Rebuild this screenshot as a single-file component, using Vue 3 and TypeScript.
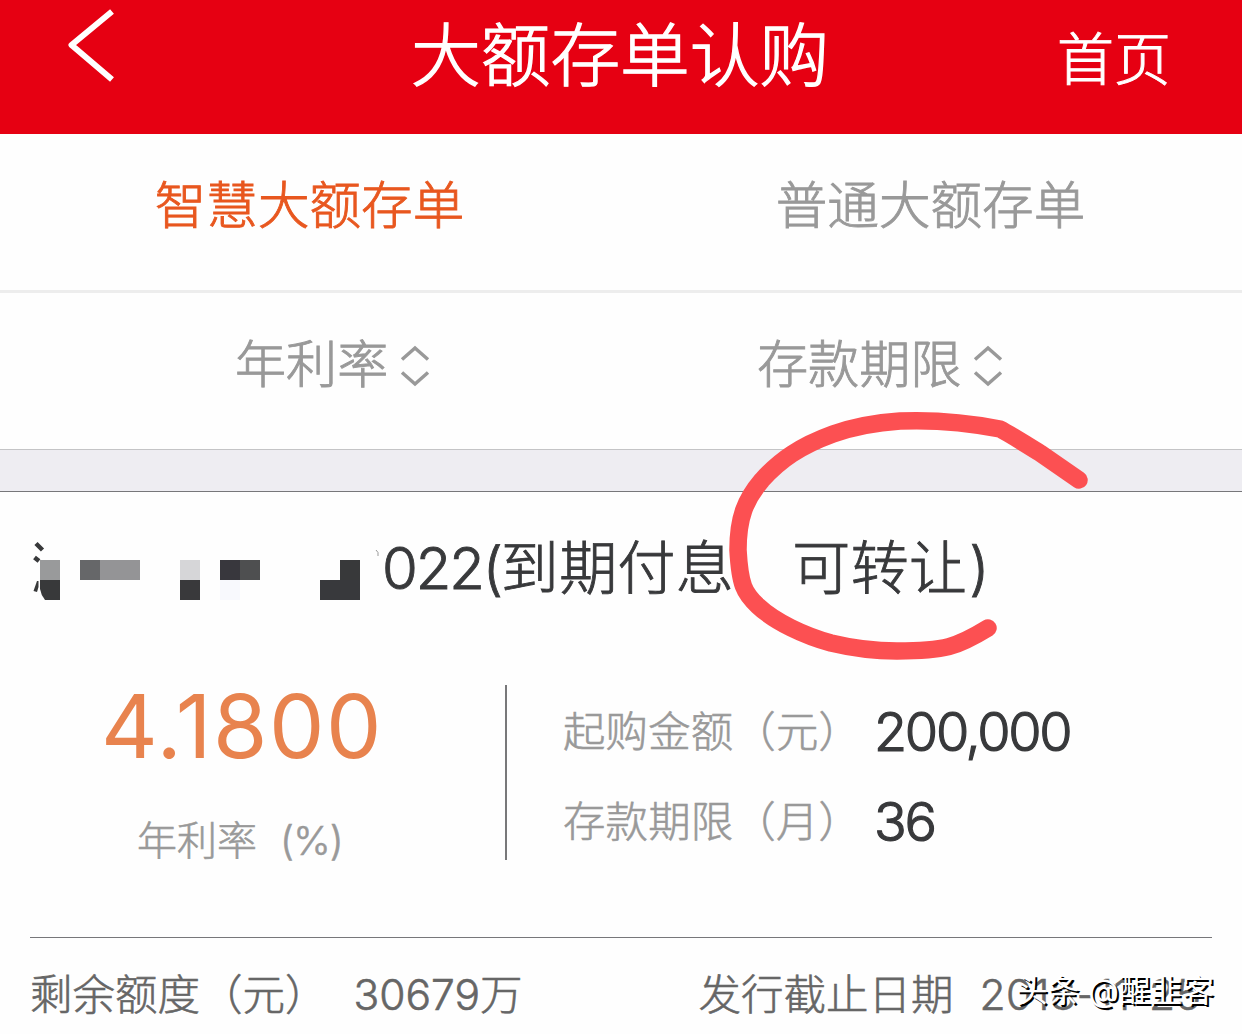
<script setup lang="ts">
import { ref } from 'vue'

interface Block {
  x: number
  y: number
  w: number
  color: string
}

const tabs = ['智慧大额存单', '普通大额存单']
const activeTab = ref(0)

const sorters = [
  { label: '年利率', className: 'sorter-rate' },
  { label: '存款期限', className: 'sorter-term' },
]

const details = [
  { label: '起购金额（元）', value: '200,000' },
  { label: '存款期限（月）', value: '36' },
]

// 产品名称的打码色块
const blocks: Block[] = [
  { x: 50, y: 0, w: 20, color: '#666769' },
  { x: 70, y: 0, w: 40, color: '#949496' },
  { x: 150, y: 0, w: 20, color: '#d6d6d8' },
  { x: 150, y: 20, w: 20, color: '#39393b' },
  { x: 190, y: 0, w: 20, color: '#38373d' },
  { x: 210, y: 0, w: 20, color: '#4e4f50' },
  { x: 190, y: 20, w: 20, color: '#f8f9fd' },
  { x: 310, y: 0, w: 20, color: '#38393a' },
  { x: 290, y: 20, w: 40, color: '#38393c' },
]
</script>

<template>
  <div class="page">
    <header class="navbar">
      <svg class="back" width="60" height="90" viewBox="0 0 60 90">
        <path d="M52 11.5 L11.5 45 L52 79.5" />
      </svg>
      <h1 class="title">大额存单认购</h1>
      <span class="home">首页</span>
    </header>

    <nav class="tabs">
      <span
        v-for="(tab, i) in tabs"
        :key="tab"
        class="tab"
        :class="{ active: i === activeTab }"
        @click="activeTab = i"
      >{{ tab }}</span>
    </nav>

    <div class="sorters">
      <div v-for="s in sorters" :key="s.label" class="sorter" :class="s.className">
        <span>{{ s.label }}</span>
        <svg width="30" height="42" viewBox="0 0 30 42">
          <path d="M2 14.5 L15 3 L28 14.5 M2 27.5 L15 39 L28 27.5" />
        </svg>
      </div>
    </div>

    <div class="band" />

    <section class="card">
      <div class="name">
        <svg class="mosaic" width="352" height="70" viewBox="0 0 352 70">
          <path class="stroke" d="M6 9.500 L12.500 16 M4.500 23.500 L9 27" />
          <path class="fill" d="M7 47 L8.500 47 L8.500 53 L7 58 L3.500 57 Z" />
          <path class="tick" d="M346 16 q3 2 2 6" />
          <rect x="10" y="26" width="20" height="20" fill="#999a9b" />
          <path class="fill" d="M10 46 H30 V66 H15 Q11 61 10 55 Z" />
          <rect
            v-for="(b, i) in blocks"
            :key="i"
            :x="b.x"
            :y="b.y + 26"
            :width="b.w"
            height="20"
            :fill="b.color"
          />
        </svg>
        <span class="code">022(</span><span class="term">到期付息　可转让</span><span>)</span>
      </div>

      <div class="body">
        <div class="rate">
          <div class="rate-value">4.1800</div>
          <div class="rate-label">年利率<span class="unit">(%)</span></div>
        </div>
        <dl class="details">
          <div v-for="d in details" :key="d.label" class="detail">
            <dt>{{ d.label }}</dt>
            <dd>{{ d.value }}</dd>
          </div>
        </dl>
      </div>

      <footer class="footer">
        <span>剩余额度（元）</span>
        <span class="quota">30679万</span>
        <span class="deadline">发行截止日期</span>
        <span class="date">2018-11-25</span>
      </footer>
    </section>

    <!-- 手绘圈注 -->
    <svg class="circle" width="380" height="270" viewBox="720 400 380 270">
      <path
        d="M1079 480 L1040 453 C1025 444 1010 434 1000 429 C960 421 925 420 900 421 C870 423 850 428 833 434 C800 446 780 460 762 480 C745 500 738 518 738 550 C740 585 744 593 758 606 C775 622 805 636 831 643 C860 650 880 651 897 651 C945 651 957 647 988 628"
      />
    </svg>
    <div class="watermark">头条 @醒韭客</div>
  </div>
</template>

<style>
body {
  margin: 0;
  background: #fefefe;
}
</style>

<style scoped>
.page {
  position: relative;
  width: 1242px;
  height: 1034px;
  overflow: hidden;
  background: #fefefe;
  font-family: Inter, 'Noto Sans CJK SC', sans-serif;
  font-weight: 300;
  white-space: nowrap;
  -webkit-text-stroke: 0.9px currentColor;
}

.navbar {
  display: grid;
  grid-template-columns: 411px 1fr 185px;
  height: 134px;
  background: #e60012;
  color: #fff;
}

.back {
  margin-left: 60px;
}

.back path {
  fill: none;
  stroke: #fff;
  stroke-width: 6;
  stroke-linejoin: round;
}

.title {
  margin: 0;
  font-size: 69.7px;
  font-weight: 300;
  line-height: 112px;
  -webkit-text-stroke-width: 1.3px;
}

.home {
  font-size: 57px;
  line-height: 120px;
}

.tabs {
  display: grid;
  grid-template-columns: 1fr 1fr;
  height: 156px;
  border-bottom: 3px solid #ededed;
}

.tab {
  padding-right: 2px;
  text-align: center;
  font-size: 51.6px;
  line-height: 142px;
  color: #999;
}

.tab.active {
  color: #e8571f;
}

.sorters {
  display: grid;
  grid-template-columns: 757px 1fr;
  height: 156px;
}

.sorter {
  display: flex;
  font-size: 51.1px;
  line-height: 143px;
  color: #999;
}

.sorter-rate {
  padding-left: 235px;
}

.sorter svg {
  margin: 52px 0 0 12px;
}

.sorter path {
  fill: none;
  stroke: #999;
  stroke-width: 3.5;
}

.band {
  box-sizing: border-box;
  height: 43px;
  border-top: 1px solid #c4c4c6;
  border-bottom: 1px solid #77777a;
  background: #eeedf2;
}

.card {
  padding: 0 30px;
  color: #38393b;
}

.name {
  display: flex;
  height: 193px;
  font-size: 58px;
  line-height: 153px;
}

.mosaic {
  flex: none;
  margin-top: 42px;
}

.stroke {
  fill: none;
  stroke: #38393b;
  stroke-width: 4.5;
}

.fill {
  fill: #38393a;
}

.tick {
  fill: none;
  stroke: #999;
}

.code {
  letter-spacing: -2.1px;
}

.term {
  margin-right: 2px;
  letter-spacing: 0.3px;
}

.body {
  display: flex;
  height: 252px;
}

.rate {
  box-sizing: border-box;
  width: 477px;
  height: 175px;
  padding-right: 51px;
  border-right: 2px solid #78787a;
  text-align: center;
}

.rate-value {
  font-size: 88px;
  font-weight: 400;
  line-height: 82px;
  letter-spacing: 1.5px;
  color: #e8834e;
  -webkit-text-stroke-width: 0;
}

.rate-label {
  margin-top: 32px;
  padding-right: 4px;
  font-size: 40px;
  line-height: 83px;
  color: #999;
  -webkit-text-stroke-width: 0.6px;
}

.unit {
  margin-left: 23px;
  letter-spacing: -0.8px;
}

.details {
  margin: 0 0 0 56px;
}

.detail {
  display: flex;
  height: 90px;
  line-height: 94px;
}

.detail dt {
  width: 311px;
  font-size: 42.4px;
  letter-spacing: 0.2px;
  color: #999;
  -webkit-text-stroke-width: 0.6px;
}

.detail dd {
  margin: 0;
  font-size: 54px;
  line-height: 94px;
  letter-spacing: -2.3px;
  -webkit-text-stroke-width: 1.2px;
}

.footer {
  display: flex;
  border-top: 1px solid #77777a;
  font-size: 42.5px;
  line-height: 114px;
  color: #666;
  -webkit-text-stroke-width: 0.6px;
}

.quota {
  width: 345px;
  margin-left: 26px;
}

.date {
  margin-left: 26px;
  letter-spacing: 0.5px;
}

.circle {
  position: absolute;
  left: 720px;
  top: 400px;
}

.circle path {
  fill: none;
  stroke: #fc5052;
  stroke-width: 17.5;
  stroke-linecap: round;
  stroke-linejoin: round;
}

.watermark {
  position: absolute;
  left: 1016px;
  top: 970px;
  font-size: 31.7px;
  font-weight: 400;
  line-height: 42px;
  color: #fff;
  text-shadow: 2px 2px 0 #000;
  -webkit-text-stroke-width: 0;
}
</style>
